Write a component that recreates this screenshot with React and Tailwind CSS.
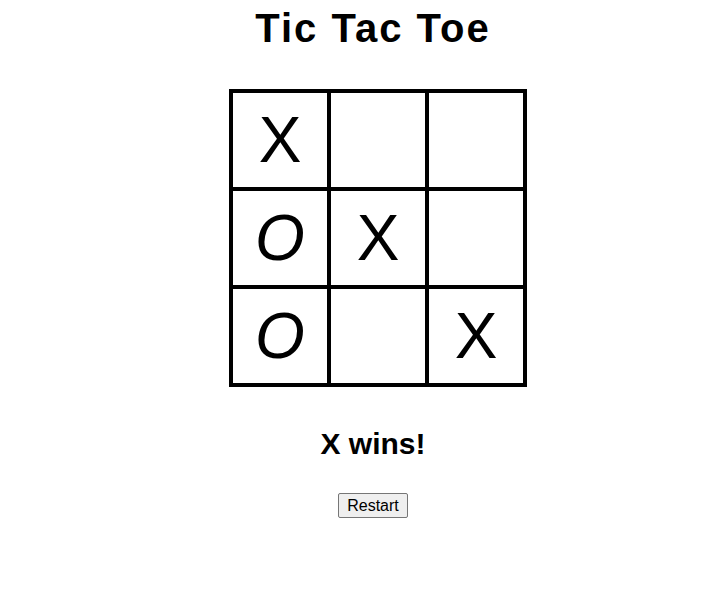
import { useState } from 'react'

const WIN_LINES = [
  [0, 1, 2], [3, 4, 5], [6, 7, 8],
  [0, 3, 6], [1, 4, 7], [2, 5, 8],
  [0, 4, 8], [2, 4, 6],
]

function getWinner(cells) {
  for (const [a, b, c] of WIN_LINES) {
    if (cells[a] && cells[a] === cells[b] && cells[a] === cells[c]) return cells[a]
  }
  return null
}

const START = ['X', null, null, 'O', 'X', null, 'O', null, 'X']

function Cell({ value, onClick }) {
  return (
    <button
      onClick={onClick}
      className="w-[98px] h-[98px] border-2 border-black bg-white flex items-center justify-center text-[64px] leading-none text-black font-normal"
    >
      {value === 'O' ? <span className="italic">O</span> : value}
    </button>
  )
}

export default function App() {
  const [cells, setCells] = useState(START)
  const winner = getWinner(cells)
  const xNext = cells.filter(Boolean).length % 2 === 0

  const play = (i) => {
    if (cells[i] || winner) return
    const next = cells.slice()
    next[i] = xNext ? 'X' : 'O'
    setCells(next)
  }

  const status = winner
    ? `${winner} wins!`
    : cells.every(Boolean)
      ? 'Draw!'
      : `Next: ${xNext ? 'X' : 'O'}`

  return (
    <div className="min-h-screen bg-white pl-[39px] flex flex-col items-center font-['Comic_Sans_MS','Liberation_Sans',sans-serif] text-black">
      <h1 className="text-[40px] leading-[56px] font-bold tracking-[2px]">Tic Tac Toe</h1>

      {/* Board */}
      <div className="mt-[33px] ml-[10px] border-2 border-black grid grid-cols-3">
        {cells.map((v, i) => (
          <Cell key={i} value={v} onClick={() => play(i)} />
        ))}
      </div>

      <div className="mt-[37px] text-[30px] leading-[40px] font-bold">{status}</div>

      <button
        onClick={() => setCells(Array(9).fill(null))}
        className="mt-[29px] px-2 py-px border border-[#767676] rounded-[2px] bg-[#efefef] text-[16px] leading-[21px] font-['Liberation_Sans',Arial,sans-serif]"
      >
        Restart
      </button>
    </div>
  )
}
